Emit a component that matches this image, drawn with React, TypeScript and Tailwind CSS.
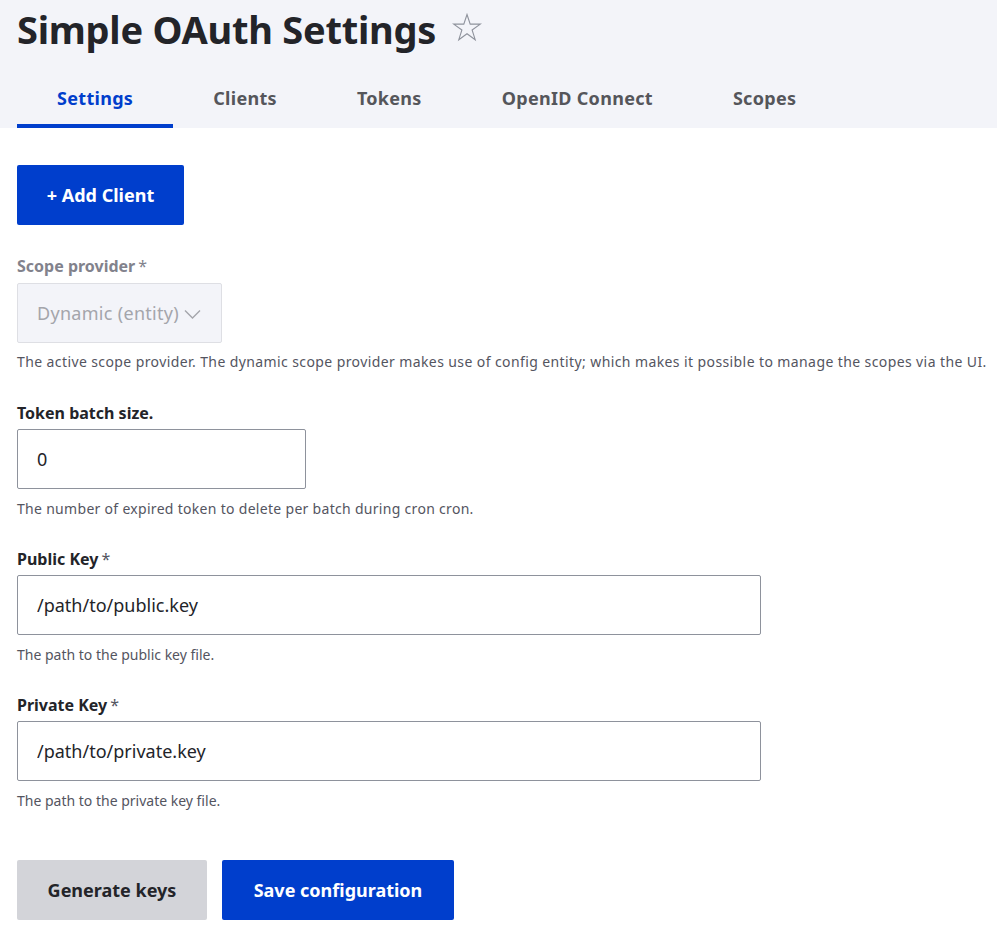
const tabs = ['Settings', 'Clients', 'Tokens', 'OpenID Connect', 'Scopes'];

function Field({
  label,
  required,
  value,
  width,
  help,
  helpClass = '',
}: {
  label: string;
  required?: boolean;
  value: string;
  width: string;
  help: string;
  helpClass?: string;
}) {
  return (
    <div className="mb-[31px]">
      <label className="block text-[16px] font-bold leading-[20px] text-[#232429] mb-[6px]">
        {label}
        {required && <span className="ml-[3px] font-normal text-[#54555f]">*</span>}
      </label>
      <input
        type="text"
        defaultValue={value}
        className={`${width} h-[60px] rounded-[2px] border border-[#8e929c] bg-white px-[19px] text-[18px] text-[#232429] outline-none`}
      />
      <div className={`mt-[11px] text-[14px] leading-[18px] text-[#54555f] ${helpClass}`}>{help}</div>
    </div>
  );
}

export default function App() {
  return (
    <div className="min-h-screen bg-white font-['Noto_Sans',sans-serif] text-[#232429]">
      <div className="bg-[#f3f4f9] px-[17px]">
        <div className="flex h-[58px] items-center">
          <h1 className="text-[38px] font-bold leading-[48px] tracking-[-0.25px] text-[#232429]">
            Simple OAuth Settings
          </h1>
          <svg className="ml-[16px] mt-[-2px]" width="30" height="30" viewBox="0 0 30 30" fill="none">
            <path
              d="M15 1.5l3.2 9.6h10.1l-8.2 5.9 3.1 9.7-8.2-6-8.2 6 3.1-9.7-8.2-5.9h10.1z"
              stroke="#8e929c"
              strokeWidth="1.1"
              strokeLinejoin="miter"
            />
          </svg>
        </div>
        <div className="flex h-[70px] items-stretch">
          {tabs.map((t, i) => (
            <div
              key={t}
              className={`flex items-center px-10 pt-[14px] text-[18px] font-bold tracking-[0.3px] border-b-[4px] ${
                i === 0 ? 'border-[#003ecc] text-[#003ecc]' : 'border-transparent text-[#55565b]'
              }`}
            >
              {t}
            </div>
          ))}
        </div>
      </div>

      <div className="px-[17px] pt-[37px]">
        <button className="h-[60px] w-[167px] rounded-[2px] bg-[#003ecc] text-[18px] font-bold text-white">
          + Add Client
        </button>

        <div className="mt-[31px] mb-[32px]">
          <div className="text-[16px] font-bold leading-[20px] text-[#82828c] mb-[7px]">
            Scope provider<span className="ml-[3px] font-normal">*</span>
          </div>
          <div className="flex h-[60px] w-[205px] items-center rounded-[2px] border border-[#dedfe4] bg-[#f3f4f9] pl-[19px] text-[18px] tracking-[0.3px] text-[#a4a5ab]">
            <span>Dynamic (entity)</span>
            <svg className="ml-[5px] mt-[1px]" width="17" height="10" viewBox="0 0 17 10" fill="none">
              <path d="M1 1.5l7.5 7.5 7.5-7.5" stroke="#a4a5ab" strokeWidth="1.4" />
            </svg>
          </div>
          <div className="mt-[10px] text-[14px] leading-[18px] text-[#54555f] tracking-[0.4px] whitespace-nowrap">
            The active scope provider. The dynamic scope provider makes use of config entity; which makes it possible to manage the scopes via the UI.
          </div>
        </div>

        <Field
          label="Token batch size."
          value="0"
          width="w-[289px]"
          help="The number of expired token to delete per batch during cron cron."
          helpClass="tracking-[0.3px]"
        />
        <Field
          label="Public Key"
          required
          value="/path/to/public.key"
          width="w-[744px]"
          help="The path to the public key file."
        />
        <Field
          label="Private Key"
          required
          value="/path/to/private.key"
          width="w-[744px]"
          help="The path to the private key file."
        />

        <div className="flex gap-[15px] pt-[19px]">
          <button className="h-[60px] w-[190px] rounded-[2px] bg-[#d3d4d9] text-[18px] font-bold text-[#232429]">
            Generate keys
          </button>
          <button className="h-[60px] w-[232px] rounded-[2px] bg-[#003ecc] text-[18px] font-bold text-white">
            Save configuration
          </button>
        </div>
      </div>
    </div>
  );
}
